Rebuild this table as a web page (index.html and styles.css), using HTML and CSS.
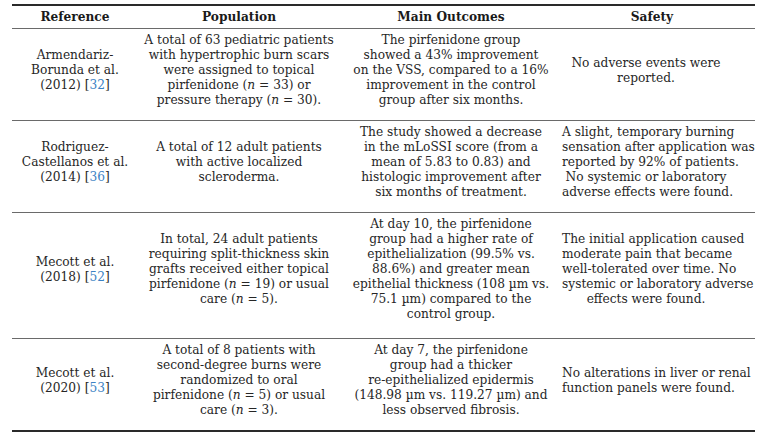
FILE: index.html
```html
<!DOCTYPE html>
<html lang="en">
<head>
<meta charset="utf-8">
<title>Pirfenidone studies</title>
<link rel="stylesheet" href="styles.css">
</head>
<body>
<table class="studies">
  <colgroup>
    <col class="c-ref">
    <col class="c-pop">
    <col class="c-out">
    <col class="c-safe">
  </colgroup>
  <thead>
    <tr>
      <th>Reference</th>
      <th>Population</th>
      <th>Main Outcomes</th>
      <th class="last">Safety</th>
    </tr>
  </thead>
  <tbody>
    <tr>
      <td>Armendariz-<br>Borunda et al.<br>(2012) [<a class="cite">32</a>]</td>
      <td>A total of 63 pediatric patients<br>with hypertrophic burn scars<br>were assigned to topical<br>pirfenidone (<i>n</i> = 33) or<br>pressure therapy (<i>n</i> = 30).</td>
      <td>The pirfenidone group<br>showed a 43% improvement<br>on the VSS, compared to a 16%<br>improvement in the control<br>group after six months.</td>
      <td class="last">No adverse events were<br>reported.</td>
    </tr>
    <tr>
      <td>Rodriguez-<br>Castellanos et al.<br>(2014) [<a class="cite">36</a>]</td>
      <td>A total of 12 adult patients<br>with active localized<br>scleroderma.</td>
      <td>The study showed a decrease<br>in the mLoSSI score (from a<br>mean of 5.83 to 0.83) and<br>histologic improvement after<br>six months of treatment.</td>
      <td class="last">A slight, temporary burning<br>sensation after application was<br>reported by 92% of patients.<br>No systemic or laboratory<br>adverse effects were found.</td>
    </tr>
    <tr class="tall">
      <td>Mecott et al.<br>(2018) [<a class="cite">52</a>]</td>
      <td>In total, 24 adult patients<br>requiring split-thickness skin<br>grafts received either topical<br>pirfenidone (<i>n</i> = 19) or usual<br>care (<i>n</i> = 5).</td>
      <td>At day 10, the pirfenidone<br>group had a higher rate of<br>epithelialization (99.5% vs.<br>88.6%) and greater mean<br>epithelial thickness (108 µm vs.<br>75.1 µm) compared to the<br>control group.</td>
      <td class="last">The initial application caused<br>moderate pain that became<br>well-tolerated over time. No<br>systemic or laboratory adverse<br>effects were found.</td>
    </tr>
    <tr>
      <td>Mecott et al.<br>(2020) [<a class="cite">53</a>]</td>
      <td>A total of 8 patients with<br>second-degree burns were<br>randomized to oral<br>pirfenidone (<i>n</i> = 5) or usual<br>care (<i>n</i> = 3).</td>
      <td>At day 7, the pirfenidone<br>group had a thicker<br>re-epithelialized epidermis<br>(148.98 µm vs. 119.27 µm) and<br>less observed fibrosis.</td>
      <td class="last">No alterations in liver or renal<br>function panels were found.</td>
    </tr>
  </tbody>
</table>
</body>
</html>
```
FILE: styles.css
```css
html, body {
  margin: 0;
  padding: 0;
  background: #ffffff;
}

body {
  font-family: "DejaVu Serif", "Liberation Serif", serif;
  font-size: 12.2px;
  color: #262626;
}

.studies {
  margin: 4px 0 0 12px;
  width: 743px;
  border-collapse: collapse;
  table-layout: fixed;
  border-top: 2px solid #2a2a2a;
  border-bottom: 2px solid #2a2a2a;
}

.c-ref { width: 126px; }
.c-pop { width: 202px; }
.c-out { width: 222px; }
.c-safe { width: 193px; }

.studies th,
.studies td {
  text-align: center;
  white-space: nowrap;
  padding: 0;
}

.studies th {
  font-weight: bold;
  color: #1a1a1a;
  line-height: 15px;
  padding: 4px 0 3px;
  border-bottom: 1px solid #6a6a6a;
}

.studies td {
  line-height: 15px;
  vertical-align: middle;
  padding: 4px 0 12px;
}

.studies tbody tr + tr td {
  border-top: 1px solid #6a6a6a;
}

.studies tr.tall td {
  padding-bottom: 16px;
}

.studies td.last {
  padding-right: 25px;
}

.studies th.last {
  padding-right: 13px;
}

.cite {
  color: #3b82c4;
  text-decoration: none;
}
```
